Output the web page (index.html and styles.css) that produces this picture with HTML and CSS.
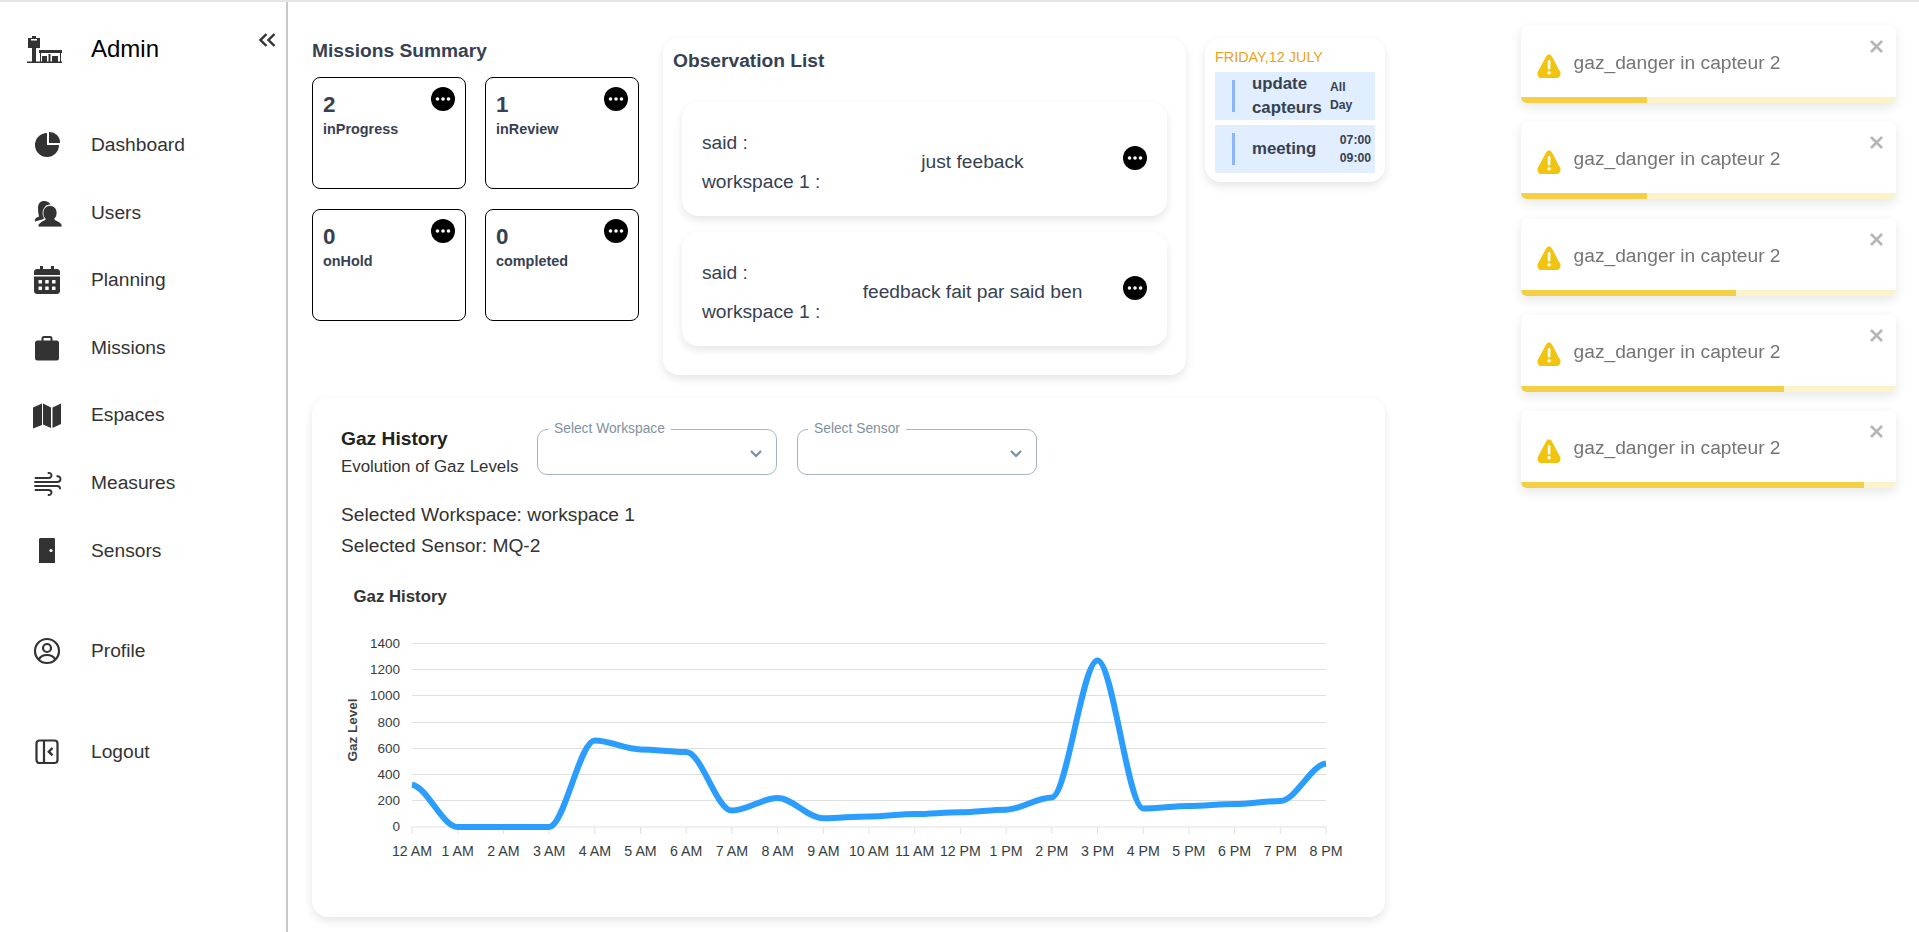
FILE: index.html
```html
<!DOCTYPE html>
<html>
<head>
<meta charset="utf-8"/>
<title>Admin dashboard</title>
<link rel="stylesheet" href="styles.css">
</head>
<body>

<svg class="defs" width="0" height="0">
  <symbol id="dots" viewBox="0 0 24 24">
    <circle cx="12" cy="12" r="12" fill="#000"/>
    <circle cx="6.5" cy="12" r="1.8" fill="#fff"/>
    <circle cx="12" cy="12" r="1.8" fill="#fff"/>
    <circle cx="17.5" cy="12" r="1.8" fill="#fff"/>
  </symbol>
  <symbol id="warn" viewBox="0 0 24 24">
    <path fill="#f1c40f" d="M12 0.5c-1.1 0-2.1.6-2.7 1.6L.9 17.8C-.4 20.2 1.2 24 4 24h16c2.8 0 4.4-3.8 3.1-6.2L14.7 2.1C14.1 1.1 13.1.5 12 .5z"/>
    <rect x="10.8" y="6" width="2.6" height="9.5" rx="1" fill="#fff"/>
    <circle cx="12.1" cy="18.8" r="1.7" fill="#fff"/>
  </symbol>
  <symbol id="chev" viewBox="0 0 14 10">
    <path d="M2 2l5 5 5-5" fill="none" stroke="#78909c" stroke-width="2.2"/>
  </symbol>
  <symbol id="close" viewBox="0 0 13 13">
    <path d="M1 1l11 11M12 1L1 12" fill="none" stroke="#b5b5b5" stroke-width="2.6"/>
  </symbol>
</svg>

<div class="layout">

  <!-- sidebar -->
  <aside class="sidebar">
    <div class="side-head">
      <svg class="logo" width="36" height="28" viewBox="0 0 36 28">
        <path fill="#333" d="M1 2h4V0h4v2h4v10H9v14H5V12H1z"/>
        <rect x="4" y="3" width="6" height="1.5" fill="#fff"/>
        <rect x="12" y="14" width="23" height="3" fill="#333"/>
        <path fill="#333" d="M13 17h1v9h-1zM33 17h1v9h-1zM15 20h5v6h-5zM25 20h6v6h-6zM21.5 18h2v8h-2z"/>
        <rect x="0" y="25.5" width="35" height="1.5" fill="#333"/>
      </svg>
      <span class="side-title">Admin</span>
      <svg class="collapse" width="18" height="14" viewBox="0 0 18 14">
        <path d="M8.5 1L2.5 7l6 6M16.5 1l-6 6 6 6" fill="none" stroke="#333" stroke-width="2.4"/>
      </svg>
    </div>

    <nav class="side-nav">
      <a class="side-link">
        <svg class="side-icon" viewBox="0 0 30 30"><path fill="#333" d="M15 3A12 12 0 1 0 27 15H15z"/><path fill="#333" d="M17 2a10.5 10.5 0 0 1 11 11H17z"/></svg>
        Dashboard
      </a>
      <a class="side-link">
        <svg class="side-icon" viewBox="0 0 30 30"><path fill="#333" d="M6 10C6 5.5 8.5 3 12 3c3 0 5.500 1.5 6.500 3.500-4-.5-7.500 3-7 8 .2 2 1 3.500 2 5-1 .8-3 2-5 2.500-1.500.4-4 1-5.500 1.500C2 21 4.500 19.500 7 18.500 6.500 16 6 13 6 10z"/><path fill="#333" stroke="#fff" stroke-width=".8" d="M18 7.500c4 0 7 3 7 7.500 0 2.500-1 4.500-2.500 6 .5 1.500 5 2 7 5 .5.8.5 1.500.5 3H6c0-1.500.2-2.200.8-3 2-3 6-3.500 6.700-5C12 20 11 18 11 15c0-4.500 3-7.500 7-7.500z"/></svg>
        Users
      </a>
      <a class="side-link">
        <svg class="side-icon" viewBox="0 0 30 30"><path fill="#333" d="M8 1h3v3h8V1h3v3h3c1.500 0 3 1 3 3v3H2V7c0-2 1.500-3 3-3h3zM2 11.500h26V26c0 2-1.500 3-3 3H5c-1.500 0-3-1-3-3z"/><g fill="#fff"><rect x="6.500" y="15" width="3.500" height="3.500" rx=".5"/><rect x="13.200" y="15" width="3.500" height="3.500" rx=".5"/><rect x="20" y="15" width="3.500" height="3.500" rx=".5"/><rect x="6.500" y="21.500" width="3.500" height="3.500" rx=".5"/><rect x="13.200" y="21.500" width="3.500" height="3.500" rx=".5"/><rect x="20" y="21.500" width="3.500" height="3.500" rx=".5"/></g></svg>
        Planning
      </a>
      <a class="side-link">
        <svg class="side-icon" viewBox="0 0 30 30"><rect x="3" y="7.500" width="24" height="20" rx="2.500" fill="#333"/><path d="M10.500 8V5.500c0-1 .7-1.500 1.500-1.500h6c.8 0 1.500.5 1.500 1.500V8" fill="none" stroke="#333" stroke-width="2"/></svg>
        Missions
      </a>
      <a class="side-link">
        <svg class="side-icon" viewBox="0 0 30 30"><path fill="#333" d="M1 7.500l9-4v21.500l-9 3.500zM11 3.500l8 4V28l-8-3.500zM20.500 7.500l8.500-4V24l-8.500 4z"/></svg>
        Espaces
      </a>
      <a class="side-link">
        <svg class="side-icon" viewBox="0 0 30 30"><g fill="none" stroke="#333" stroke-width="1.900" stroke-linecap="round"><path d="M3.500 10h13c2 0 3-1.200 3-2.700S18.200 4.700 16.500 5"/><path d="M3 14h22c2.300 0 3.500-1.500 3.500-3s-1.300-3-3.200-2.800"/><path d="M3 18h22c2 0 3 1.200 3 2.500"/><path d="M3.500 22h13c2 0 3 1.200 3 2.500s-1.300 2.800-3 2.500"/></g></svg>
        Measures
      </a>
      <a class="side-link">
        <svg class="side-icon" viewBox="0 0 30 30"><path fill="#333" d="M7 3.500C7 2.500 7.700 2 8.500 2h13c.8 0 1.500.5 1.500 1.500V27H7z"/><circle cx="19" cy="14.500" r="1.600" fill="#fff"/></svg>
        Sensors
      </a>
      <a class="side-link side-link-sep">
        <svg class="side-icon" viewBox="0 0 30 30"><g fill="none" stroke="#333" stroke-width="2.200"><circle cx="15" cy="15" r="12"/><circle cx="15" cy="12" r="4"/><path d="M6.800 23.500c1.500-3 4.500-4.500 8.200-4.500s6.700 1.500 8.200 4.500"/></g></svg>
        Profile
      </a>
      <a class="side-link side-link-sep">
        <svg class="side-icon" viewBox="0 0 30 30"><g fill="none" stroke="#333" stroke-width="2.200"><rect x="4.500" y="3.500" width="21" height="22.500" rx="3"/><path d="M12 3.500V26"/><path d="M20.500 11l-3.700 3.700 3.700 3.700" stroke-width="2.400"/></g></svg>
        Logout
      </a>
    </nav>
  </aside>

  <!-- main content -->
  <main class="main">
    <div class="top-row">

      <section class="summary">
        <h3 class="sec-title summary-title">Missions Summary</h3>
        <div class="summary-grid">
          <div class="stat-card">
            <svg class="dots stat-dots"><use href="#dots"/></svg>
            <div class="stat-num">2</div>
            <div class="stat-label">inProgress</div>
          </div>
          <div class="stat-card">
            <svg class="dots stat-dots"><use href="#dots"/></svg>
            <div class="stat-num">1</div>
            <div class="stat-label">inReview</div>
          </div>
          <div class="stat-card">
            <svg class="dots stat-dots"><use href="#dots"/></svg>
            <div class="stat-num">0</div>
            <div class="stat-label">onHold</div>
          </div>
          <div class="stat-card">
            <svg class="dots stat-dots"><use href="#dots"/></svg>
            <div class="stat-num">0</div>
            <div class="stat-label">completed</div>
          </div>
        </div>
      </section>

      <section class="panel obs">
        <h3 class="sec-title obs-title">Observation List</h3>
        <div class="obs-item">
          <div class="obs-who">
            <div>said :</div>
            <div>workspace 1 :</div>
          </div>
          <div class="obs-text">just feeback</div>
          <svg class="dots obs-dots"><use href="#dots"/></svg>
        </div>
        <div class="obs-item">
          <div class="obs-who">
            <div>said :</div>
            <div>workspace 1 :</div>
          </div>
          <div class="obs-text">feedback fait par said ben</div>
          <svg class="dots obs-dots"><use href="#dots"/></svg>
        </div>
      </section>

      <section class="panel cal">
        <div class="cal-date">FRIDAY,12 JULY</div>
        <div class="cal-row">
          <span class="cal-bar"></span>
          <span class="cal-name">update capteurs</span>
          <span class="cal-time cal-allday">All Day</span>
        </div>
        <div class="cal-row">
          <span class="cal-bar"></span>
          <span class="cal-name">meeting</span>
          <span class="cal-time">07:00<br>09:00</span>
        </div>
      </section>
    </div>

    <section class="panel gaz">
      <div class="gaz-head">
        <div class="gaz-heading">
          <div class="gaz-title">Gaz History</div>
          <div class="gaz-sub">Evolution of Gaz Levels</div>
        </div>
        <div class="select-box">
          <span class="select-label">Select Workspace</span>
          <svg class="select-chev"><use href="#chev"/></svg>
        </div>
        <div class="select-box">
          <span class="select-label">Select Sensor</span>
          <svg class="select-chev"><use href="#chev"/></svg>
        </div>
      </div>
      <p class="gaz-line gaz-line-first">Selected Workspace: workspace 1</p>
      <p class="gaz-line">Selected Sensor: MQ-2</p>

      <svg class="chart" width="1020" height="300" viewBox="0 0 1020 300">
        <text class="chart-title" x="11.5" y="21">Gaz History</text>

        <g class="grid">
          <line x1="70" x2="984" y1="62.5" y2="62.5"/>
          <line x1="70" x2="984" y1="88.5" y2="88.5"/>
          <line x1="70" x2="984" y1="114.5" y2="114.5"/>
          <line x1="70" x2="984" y1="141.5" y2="141.5"/>
          <line x1="70" x2="984" y1="167.5" y2="167.5"/>
          <line x1="70" x2="984" y1="193.5" y2="193.5"/>
          <line x1="70" x2="984" y1="219.5" y2="219.5"/>
          <line x1="70" x2="984" y1="246" y2="246"/>
          <path d="M70 246v7M115.7 246v7M161.4 246v7M207.1 246v7M252.8 246v7M298.5 246v7M344.2 246v7M389.9 246v7M435.6 246v7M481.3 246v7M527 246v7M572.7 246v7M618.4 246v7M664.1 246v7M709.8 246v7M755.5 246v7M801.2 246v7M846.9 246v7M892.6 246v7M938.3 246v7M984 246v7"/>
        </g>

        <g class="y-labels">
          <text x="58" y="67">1400</text>
          <text x="58" y="93">1200</text>
          <text x="58" y="119">1000</text>
          <text x="58" y="146">800</text>
          <text x="58" y="172">600</text>
          <text x="58" y="198">400</text>
          <text x="58" y="224">200</text>
          <text x="58" y="250">0</text>
        </g>

        <text class="y-title" transform="translate(14.5 149) rotate(-90)">Gaz Level</text>

        <g class="x-labels">
          <text x="70" y="275">12 AM</text>
          <text x="115.7" y="275">1 AM</text>
          <text x="161.4" y="275">2 AM</text>
          <text x="207.1" y="275">3 AM</text>
          <text x="252.8" y="275">4 AM</text>
          <text x="298.5" y="275">5 AM</text>
          <text x="344.2" y="275">6 AM</text>
          <text x="389.9" y="275">7 AM</text>
          <text x="435.6" y="275">8 AM</text>
          <text x="481.3" y="275">9 AM</text>
          <text x="527" y="275">10 AM</text>
          <text x="572.7" y="275">11 AM</text>
          <text x="618.4" y="275">12 PM</text>
          <text x="664.1" y="275">1 PM</text>
          <text x="709.8" y="275">2 PM</text>
          <text x="755.5" y="275">3 PM</text>
          <text x="801.2" y="275">4 PM</text>
          <text x="846.9" y="275">5 PM</text>
          <text x="892.6" y="275">6 PM</text>
          <text x="938.3" y="275">7 PM</text>
          <text x="984" y="275">8 PM</text>
        </g>

        <path class="series" d="M70 203.7C85.2 206,100.5 246,115.7 246C130.9 246,146.2 246,161.4 246C176.6 246,191.9 246,207.1 246C222.3 246,237.6 159.5,252.8 159.5C268 159.5,283.3 168.4,298.5 168.4C313.7 168.4,329 171,344.2 171C359.4 171,374.7 229.6,389.9 229.6C405.1 229.6,420.4 217,435.6 217C450.8 217,466.1 237.3,481.3 237.3C496.5 237.3,511.8 235.4,527 235.4C542.2 235.4,557.5 233,572.7 233C587.9 233,603.2 231.3,618.4 231.3C633.6 231.3,648.9 228.7,664.1 228.7C679.3 228.7,694.6 216.4,709.8 216.4C725 216.4,740.3 79.5,755.5 79.5C770.7 79.5,786 227.4,801.2 227.4C816.4 227.4,831.7 225,846.9 225C862.1 225,877.4 223.1,892.6 223.1C907.8 223.1,923.1 220,938.3 220C953.5 220,968.8 184,984 182.4"/>
      </svg>
    </section>
  </main>
</div>

<!-- toasts -->
<div class="toasts">
  <div class="toast">
    <div class="toast-body"><svg class="toast-icon"><use href="#warn"/></svg><span class="toast-text">gaz_danger in capteur 2</span></div>
    <svg class="toast-close"><use href="#close"/></svg>
    <div class="toast-track"><div class="toast-fill" style="width:33.6%"></div></div>
  </div>
  <div class="toast">
    <div class="toast-body"><svg class="toast-icon"><use href="#warn"/></svg><span class="toast-text">gaz_danger in capteur 2</span></div>
    <svg class="toast-close"><use href="#close"/></svg>
    <div class="toast-track"><div class="toast-fill" style="width:33.6%"></div></div>
  </div>
  <div class="toast">
    <div class="toast-body"><svg class="toast-icon"><use href="#warn"/></svg><span class="toast-text">gaz_danger in capteur 2</span></div>
    <svg class="toast-close"><use href="#close"/></svg>
    <div class="toast-track"><div class="toast-fill" style="width:57.3%"></div></div>
  </div>
  <div class="toast">
    <div class="toast-body"><svg class="toast-icon"><use href="#warn"/></svg><span class="toast-text">gaz_danger in capteur 2</span></div>
    <svg class="toast-close"><use href="#close"/></svg>
    <div class="toast-track"><div class="toast-fill" style="width:70.1%"></div></div>
  </div>
  <div class="toast">
    <div class="toast-body"><svg class="toast-icon"><use href="#warn"/></svg><span class="toast-text">gaz_danger in capteur 2</span></div>
    <svg class="toast-close"><use href="#close"/></svg>
    <div class="toast-track"><div class="toast-fill" style="width:91.5%"></div></div>
  </div>
</div>

</body>
</html>
```
FILE: styles.css
```css
* {
  box-sizing: border-box;
}

html, body {
  height: 100%;
}

body {
  margin: 0;
  overflow: hidden;
  background: #fff;
  font-family: "Liberation Sans", Arial, sans-serif;
  font-size: 19.2px;
  color: #374151;
  border-top: 2px solid #e5e5e5;
}

.defs {
  position: absolute;
}

.layout {
  display: flex;
  height: 930px;
}

/* sidebar */
.sidebar {
  width: 288px;
  flex: none;
  border-right: 2px solid #c8c8c8;
}

.side-head {
  display: flex;
  height: 109.3px;
  padding: 33px 10px 0 27px;
  align-items: flex-start;
}

.logo {
  flex: none;
  margin-top: 1px;
}

.side-title {
  margin-left: 28px;
  font-size: 24px;
  line-height: 28px;
  color: #000;
}

.collapse {
  margin-left: auto;
  margin-top: -2px;
}

.side-link {
  display: flex;
  align-items: center;
  height: 67.6px;
  padding-left: 32px;
  color: #333;
}

.side-link-sep {
  margin-top: 33px;
}

.side-icon {
  width: 30px;
  height: 30px;
  flex: none;
  margin-right: 29px;
}

/* main */
.main {
  flex: 1;
  padding: 36px 0 0 24px;
}

.top-row {
  display: flex;
  align-items: flex-start;
  width: 1073px;
}

.panel {
  background: #fff;
  border-radius: 16px;
  box-shadow: 0 4px 10px rgba(0, 0, 0, 0.1);
}

.sec-title {
  margin: 0;
  font-size: 19.2px;
  line-height: 24px;
  font-weight: bold;
}

.dots {
  width: 24px;
  height: 24px;
  flex: none;
}

/* missions summary */
.summary {
  width: 327px;
  flex: none;
  padding-top: 1px;
}

.summary-title {
  margin-bottom: 14px;
}

.summary-grid {
  display: grid;
  grid-template-columns: 154px 154px;
  grid-auto-rows: 112px;
  column-gap: 19px;
  row-gap: 20px;
}

.stat-card {
  position: relative;
  padding: 14px 10px;
  border: 1.3px solid #000;
  border-radius: 8px;
}

.stat-dots {
  position: absolute;
  top: 9px;
  right: 10px;
}

.stat-num {
  font-size: 22.4px;
  line-height: 26px;
  font-weight: bold;
}

.stat-label {
  font-size: 14.4px;
  line-height: 22px;
  font-weight: bold;
}

/* observations */
.obs {
  width: 523px;
  height: 337px;
  flex: none;
  margin-left: 24px;
  padding: 11px 19px 0 10px;
}

.obs-title {
  margin-bottom: 29px;
}

.obs-item {
  display: flex;
  align-items: center;
  height: 114px;
  margin: 0 0 16px 9px;
  padding: 0 20px 0 20px;
  border-radius: 16px;
  box-shadow: 0 4px 8px rgba(0, 0, 0, 0.1);
}

.obs-who {
  width: 120px;
  flex: none;
  padding-top: 5px;
  line-height: 39px;
  white-space: nowrap;
}

.obs-text {
  flex: 1;
  padding-top: 5px;
  text-align: center;
}

.obs-dots {
  margin-top: -2px;
}

/* calendar */
.cal {
  width: 180px;
  height: 144px;
  flex: none;
  margin-left: 19px;
  padding: 8px 10px 0;
}

.cal-date {
  margin-bottom: 6px;
  padding-top: 1px;
  height: 20px;
  font-size: 14.4px;
  line-height: 20px;
  color: #eba215;
}

.cal-row {
  display: flex;
  align-items: center;
  height: 48px;
  margin-bottom: 5px;
  padding: 0 4px 0 17px;
  background: #e0eeff;
}

.cal-bar {
  width: 3px;
  height: 32px;
  flex: none;
  margin-right: 17px;
  background: #8cb4fb;
}

.cal-name {
  width: 76px;
  font-size: 16.8px;
  line-height: 24px;
  font-weight: bold;
}

.cal-time {
  margin-left: auto;
  font-size: 12.2px;
  line-height: 18px;
  font-weight: bold;
}

.cal-allday {
  width: 24px;
  margin-left: 2px;
}

/* gaz history */
.gaz {
  width: 1073px;
  height: 519px;
  margin-top: 23px;
  padding: 29px 0 0 29px;
}

.gaz-head {
  display: flex;
  align-items: flex-start;
}

.gaz-heading {
  width: 196px;
  flex: none;
}

.gaz-title {
  font-size: 19.2px;
  line-height: 24px;
  font-weight: bold;
  color: #222;
}

.gaz-sub {
  margin-top: 4px;
  font-size: 16.9px;
  line-height: 24px;
  color: #333;
}

.select-box {
  position: relative;
  width: 240px;
  height: 46px;
  margin: 2px 20px 0 0;
  border: 1px solid #a3b4bf;
  border-radius: 10px;
}

.select-label {
  position: absolute;
  top: -9px;
  left: 10px;
  padding: 0 6px;
  background: #fff;
  font-size: 13.8px;
  line-height: 16px;
  color: #7f919e;
}

.select-chev {
  position: absolute;
  top: 19px;
  right: 13px;
  width: 14px;
  height: 10px;
}

.gaz-line {
  margin: 0;
  line-height: 31px;
  color: #333;
}

.gaz-line-first {
  margin-top: 19.5px;
}

.chart {
  display: block;
  margin: 20px 0 0 1px;
}

.chart text {
  font-family: "Liberation Sans", Arial, sans-serif;
}

.chart-title {
  font-size: 16.8px;
  font-weight: bold;
  fill: #333;
}

.grid line,
.grid path {
  stroke: #e0e0e0;
  stroke-width: 1;
  fill: none;
}

.y-labels text {
  font-size: 13.5px;
  text-anchor: end;
  fill: #373d3f;
}

.x-labels text {
  font-size: 14.2px;
  text-anchor: middle;
  fill: #373d3f;
}

.y-title {
  font-size: 13.5px;
  font-weight: bold;
  text-anchor: middle;
  fill: #444;
}

.series {
  fill: none;
  stroke: #2a9dfd;
  stroke-width: 6;
}

/* toasts */
.toasts {
  position: fixed;
  top: 26px;
  left: 1521px;
  display: flex;
  flex-direction: column;
  gap: 19.25px;
  width: 375px;
}

.toast {
  position: relative;
  height: 77px;
  overflow: hidden;
  background: #fff;
  border-radius: 6px;
  box-shadow: 0 4px 12px rgba(0, 0, 0, 0.1);
}

.toast-body {
  display: flex;
  align-items: center;
  height: 71px;
  padding: 3px 0 0 16px;
  color: #757575;
}

.toast-icon {
  width: 24px;
  height: 24px;
  flex: none;
  margin-top: 5px;
  margin-right: 12.6px;
}

.toast-close {
  position: absolute;
  top: 14px;
  right: 13px;
  width: 13px;
  height: 13px;
}

.toast-track {
  height: 6px;
  background: #fcf2cc;
}

.toast-fill {
  height: 6px;
  background: #f5cf45;
}
```
